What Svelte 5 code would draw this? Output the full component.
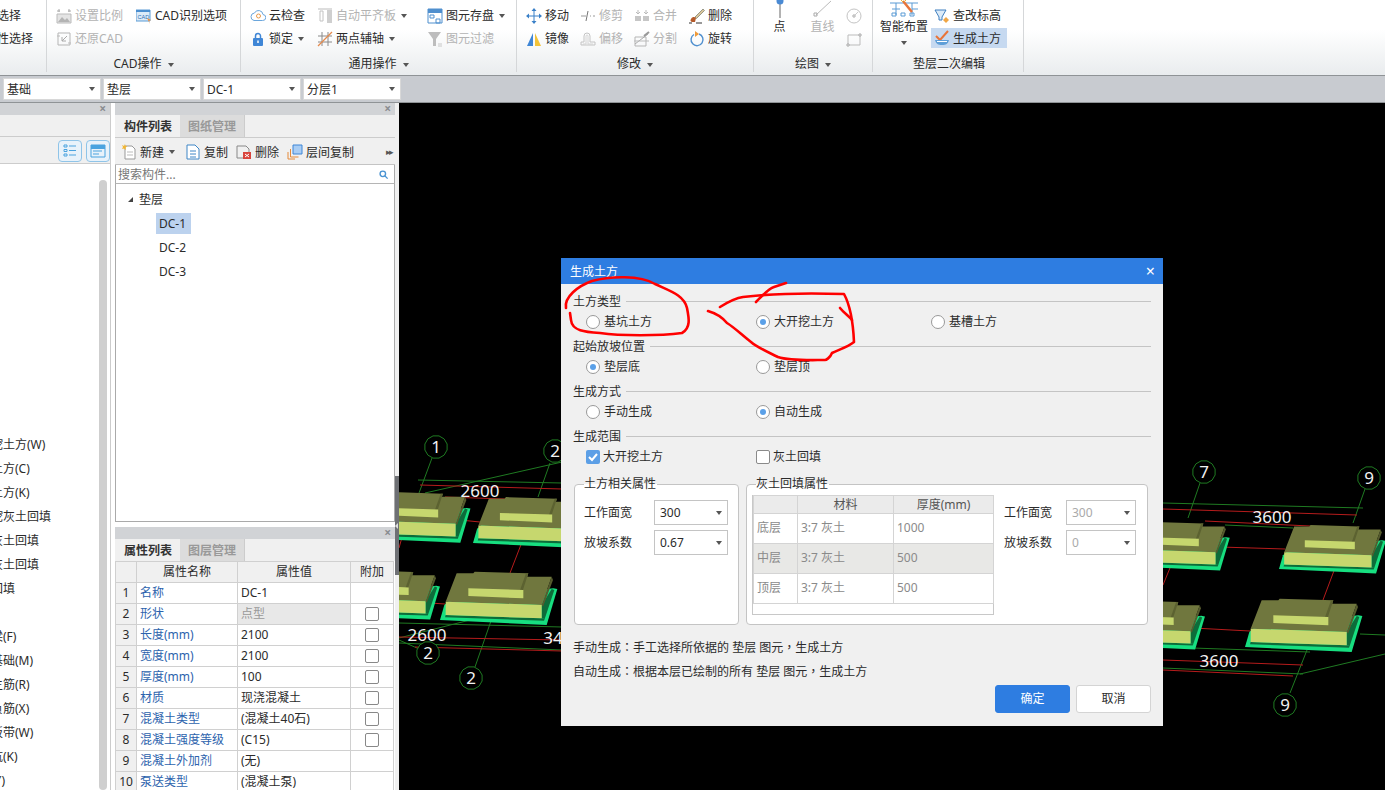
<script>
  const groups = [
    { w: 47, label: '', cols: [{ w: 46, items: [{ text: '选择', clip: -3 }, { text: '性选择', clip: -3 }] }] },
    { w: 194, pl: 9, label: 'CAD操作', cols: [
      { w: 80, items: [{ icon: 'scale', text: '设置比例', off: 1 }, { icon: 'restore', text: '还原CAD', off: 1 }] },
      { w: 100, items: [{ icon: 'cadopt', text: 'CAD识别选项' }] }
    ] },
    { w: 276, pl: 9, label: '通用操作', cols: [
      { w: 67, items: [{ icon: 'cloud', text: '云检查' }, { icon: 'lock', text: '锁定', caret: 1 }] },
      { w: 110, items: [{ icon: 'align', text: '自动平齐板', off: 1, caret: 1 }, { icon: 'axis', text: '两点辅轴', caret: 1 }] },
      { w: 85, items: [{ icon: 'save', text: '图元存盘', caret: 1 }, { icon: 'filter', text: '图元过滤', off: 1 }] }
    ] },
    { w: 237, pl: 9, label: '修改', cols: [
      { w: 54, items: [{ icon: 'move', text: '移动' }, { icon: 'mirror', text: '镜像' }] },
      { w: 54, items: [{ icon: 'trim', text: '修剪', off: 1 }, { icon: 'offset', text: '偏移', off: 1 }] },
      { w: 55, items: [{ icon: 'merge', text: '合并', off: 1 }, { icon: 'split', text: '分割', off: 1 }] },
      { w: 50, items: [{ icon: 'erase', text: '删除' }, { icon: 'rotate', text: '旋转' }] }
    ] }
  ];

  const combos = ['基础', '垫层', 'DC-1', '分层1'];

  const typeList = [
    '大开挖土方(W)', '基坑土方(C)', '基槽土方(K)', '大开挖灰土回填', '基槽灰土回填', '基坑灰土回填', '房心回填', '',
    '基础梁(F)', '筏板基础(M)', '筏板主筋(R)', '筏板负筋(X)', '基础板带(W)', '集水坑(K)', '柱墩(Y)'
  ];

  const props = [
    ['名称', 'DC-1', false],
    ['形状', '点型', true, 'off'],
    ['长度(mm)', '2100', true],
    ['宽度(mm)', '2100', true],
    ['厚度(mm)', '100', true],
    ['材质', '现浇混凝土', true],
    ['混凝土类型', '(混凝土40石)', true],
    ['混凝土强度等级', '(C15)', true],
    ['混凝土外加剂', '(无)', false],
    ['泵送类型', '(混凝土泵)', false]
  ];

  const sections = [
    { title: '土方类型', opts: [['基坑土方', false], ['大开挖土方', true], ['基槽土方', false]] },
    { title: '起始放坡位置', opts: [['垫层底', true], ['垫层顶', false]] },
    { title: '生成方式', opts: [['手动生成', false], ['自动生成', true]] }
  ];

  const layers = [['底层', '3:7 灰土', '1000'], ['中层', '3:7 灰土', '500'], ['顶层', '3:7 灰土', '500']];

  // canvas data, in page coordinates
  const footings = [
    [1245, 647, 1], [1279, 569, 0.91], [1123, 566, 0.91], [1097, 645, 0.92],
    [359, 538, 0.95], [473, 543, 0.95], [332, 615, 0.92], [440, 620, 1]
  ];
  const greenLines = [
    [432, 458, 419, 493], [425, 493, 562, 462], [418, 480, 562, 483], [550, 463, 538, 497],
    [399, 623, 562, 627], [399, 643, 562, 650], [475, 667, 492, 618], [399, 638, 470, 620],
    [1200, 483, 1188, 518], [1365, 489, 1353, 523], [1290, 693, 1307, 650],
    [1163, 503, 1363, 508], [1225, 525, 1293, 528], [1360, 634, 1385, 635],
    [1163, 647, 1310, 652], [1163, 668, 1303, 674], [1300, 674, 1385, 654], [399, 640, 428, 653]
  ];
  const redLines = [
    [420, 485, 562, 489], [445, 497, 505, 499], [522, 542, 510, 573], [399, 637, 562, 640],
    [415, 647, 562, 651], [1163, 509, 1357, 515], [1205, 521, 1310, 526], [1220, 547, 1285, 549],
    [1172, 563, 1163, 585], [1335, 568, 1323, 600], [1193, 628, 1250, 631], [1163, 660, 1303, 665],
    [1163, 670, 1293, 676], [460, 520, 480, 522], [430, 603, 445, 604], [399, 548, 404, 530]
  ];
  const marks = [[436, 447, '1'], [555, 451, '2'], [428, 653, '2'], [471, 678, '2'], [1204, 472, '7'], [1369, 478, '9'], [1285, 705, '9']];
  const dims = [[480, 497, '2600'], [427, 641, '2600'], [553, 644, '34'], [1272, 523, '3600'], [1219, 667, '3600']];

  const ring = (cx, cy) =>
    Array.from({ length: 12 }, (_, i) => {
      const a = (i * Math.PI) / 6 + Math.PI / 12;
      return `${(cx + 11.5 * Math.cos(a)).toFixed(1)},${(cy + 11.5 * Math.sin(a)).toFixed(1)}`;
    }).join(' ');
</script>

{#snippet icon(name)}
  <svg class="ico" viewBox="0 0 16 16" width="16" height="16" fill="none">
    {#if name === 'scale'}
      <path d="M1 15h14V6H1z" fill="#e4e4e4" stroke="#bbb"/><path d="M2 14l4-5 3 3 2-2 3 4z" fill="#b4b4b4"/><path d="M1 3h3M12 3h3M3 1v3M13 1v3" stroke="#aaa"/>
    {:else if name === 'restore'}
      <path d="M2 2h12v12H2z" stroke="#b5b5b5"/><path d="M11 5L6 10M6 6v4h4" stroke="#aaa"/><path d="M1 5h3M12 12h3" stroke="#bbb"/>
    {:else if name === 'cadopt'}
      <path d="M0 2h14v11H0z" fill="#dcebf8" stroke="#5b9bd5"/><path d="M0 2h14v2H0z" fill="#4b8fd0"/><text x="1.5" y="11" font-size="5.5" fill="#2d6fb5" font-family="Liberation Sans">CAD</text><path d="M11 10l4 2-2 1 1 3z" fill="#ef8f3a"/>
    {:else if name === 'cloud'}
      <path d="M4 12.500h8.500a3 3 0 0 0 .5-6 4.500 4.500 0 0 0-8.500-1.500A3.800 3.800 0 0 0 4 12.500z" stroke="#6ba6dc" fill="#fff"/><circle cx="8.500" cy="8" r="2" stroke="#ea9a4a"/>
    {:else if name === 'align'}
      <path d="M1 1h14" stroke="#bbb"/><path d="M3 3h3v10H3z" stroke="#c2c2c2"/><path d="M10 2h5v13h-5z" fill="#cfcfcf"/>
    {:else if name === 'lock'}
      <path d="M5.500 8V5a2.500 2.500 0 0 1 5 0v3" stroke="#3f86d6" stroke-width="1.500"/><path d="M4 7h8a1 1 0 0 1 1 1v6a1 1 0 0 1-1 1H4a1 1 0 0 1-1-1V8a1 1 0 0 1 1-1z" fill="#3f86d6"/><path d="M8 9.500v2.500" stroke="#fff" stroke-width="1.500"/>
    {:else if name === 'axis'}
      <path d="M1 5h14M1 11h14M5 1v14M11 1v14" stroke="#8a8a8a"/><path d="M1 15L15 1" stroke="#e58a4c" stroke-width="1.300"/>
    {:else if name === 'save'}
      <path d="M1 1h14v14H1z" fill="#fff" stroke="#4f8fce"/><path d="M1 1h14v4H1z" fill="#4f8fce"/><path d="M3 7h4v3H3zM9 11h4v4H9z" stroke="#4f8fce"/>
    {:else if name === 'filter'}
      <path d="M1 1h13L9 8v7H6V8z" fill="#bdbdbd"/><path d="M11 13h4M11 15h4" stroke="#c8c8c8"/>
    {:else if name === 'move'}
      <path d="M8 1v14M1 8h14" stroke="#3a80c8"/><path d="M8 0l2.500 3h-5zM8 16l2.500-3h-5zM0 8l3-2.500v5zM16 8l-3-2.500v5z" fill="#3a80c8"/>
    {:else if name === 'mirror'}
      <path d="M7 2v13H1z" fill="#3f86d6"/><path d="M9 2v13h6z" fill="#f2c33a"/>
    {:else if name === 'trim'}
      <path d="M1 8h5M10 8h1M13 8h2" stroke="#999"/><path d="M8 3L6 13" stroke="#777"/>
    {:else if name === 'offset'}
      <path d="M1 14v-3h3V5a3 3 0 0 1 6 0v6h5v3z" stroke="#c4c4c4"/><path d="M3 14v-1h3V5a1 1 0 0 1 2 0v8h5" stroke="#d4d4d4"/>
    {:else if name === 'merge'}
      <path d="M1 8h6v5H1zM9 8h6v5H9z" fill="#c6c6c6"/><path d="M4 2v4M12 2v4M2 4l2 2 2-2M10 4l2 2 2-2" stroke="#bbb"/>
    {:else if name === 'split'}
      <path d="M1 6h11v9H1z" stroke="#b5b5b5"/><path d="M1 13L14 3" stroke="#aaa"/><path d="M10 5l5-4" stroke="#999" stroke-width="2"/><path d="M0 10h15" stroke="#bbb"/>
    {:else if name === 'erase'}
      <path d="M6 9l8-8 1.500 1.500-8 8z" fill="#d9c59a" stroke="#998"/><path d="M2 11a3 3 0 0 1 5-1l-1 4H3a2 2 0 0 1-1-3z" fill="#b55a2a"/><path d="M0 15h3M7 15h6" stroke="#333"/>
    {:else if name === 'rotate'}
      <path d="M5 3.500A6 6 0 1 0 10 3" stroke="#4f8fce" stroke-width="1.400"/><path d="M6 0v6l4-3z" fill="#ef9a3a"/>
    {:else if name === 'list'}
      <path d="M2 2h3v2H2zM2 6.500h3v2H2zM2 11h3v2H2z" stroke="#4aa3df"/><path d="M7 3h7M7 7.500h7M7 12h7" stroke="#4aa3df"/>
    {:else if name === 'card'}
      <path d="M1 2h14v12H1z" stroke="#4aa3df"/><path d="M1 2h14v4H1z" fill="#4aa3df"/><path d="M3 8h9M3 11h6" stroke="#4aa3df"/>
    {:else if name === 'new'}
      <path d="M4 2h7l3 3v10H4z" fill="#fff" stroke="#999"/><path d="M1 1l2 1 1-2 .5 2 2 .500-2 1L5 6 3 4.500 1 5l1-2z" fill="#f2b632"/><path d="M6 8h6M6 11h6" stroke="#bbb"/>
    {:else if name === 'copy'}
      <path d="M2 1h8l4 4v10H2z" fill="#fff" stroke="#3f86c6"/><path d="M5 7h6M5 10h6M5 13h6" stroke="#3f86c6"/>
    {:else if name === 'del'}
      <path d="M1 2h9l3 3v3" stroke="#888"/><path d="M1 2v12h6" stroke="#888"/><path d="M7 8h8v7H7z" fill="#d9443c"/><path d="M9 10l4 3M13 10l-4 3" stroke="#fff"/>
    {:else if name === 'layer'}
      <path d="M6 1h9v9H6z" fill="#a9cdf4" stroke="#3f86d6"/><path d="M3.500 5v8h8" stroke="#e58a3a"/><path d="M1 8v7h7" stroke="#e58a3a"/>
    {:else if name === 'find'}
      <circle cx="7" cy="7" r="4" stroke="#4a93d2" stroke-width="2"/><path d="M10 10l4 4" stroke="#4a93d2" stroke-width="2"/>
    {:else if name === 'elev'}
      <path d="M1 2h11L8 9v3H5V9z" fill="#dcebf8" stroke="#3f7fbf"/><path d="M9 10l3 3 3-3-3-3z" fill="#f0a645" transform="translate(0 2)"/>
    {:else if name === 'earth'}
      <path d="M2 6l4 4 8-9" stroke="#e8743a" stroke-width="2"/><path d="M1 10c1 4 3 5 7 5s6-1 7-5z" fill="#5f9fd8"/><path d="M3 11.500h10" stroke="#fff"/>
    {/if}
  </svg>
{/snippet}

{#snippet ribbonItem(it)}
  <div class="rb-item" class:off={it.off}>
    {#if it.icon}{@render icon(it.icon)}{/if}
    <span class="t" style={it.clip ? `margin-left:${it.clip}px` : ''}>{it.text}</span>
    {#if it.caret}<i class="caret"></i>{/if}
  </div>
{/snippet}

<div class="app">
  <header class="ribbon">
    {#each groups as g}
      <section class="rb-group" style="width:{g.w}px">
        <div class="rb-cols" style="padding-left:{g.pl || 0}px">
          {#each g.cols as c}
            <div class="rb-col" style="width:{c.w}px">
              {#each c.items as it}{@render ribbonItem(it)}{/each}
            </div>
          {/each}
        </div>
        <div class="rb-label">{g.label}{#if g.label}<i class="caret"></i>{/if}</div>
      </section>
    {/each}

    <section class="rb-group draw">
      <div class="rb-cols">
        <div class="rb-big">
          <svg viewBox="0 0 20 18" width="20" height="18" fill="none"><path d="M10 2v16" stroke="#666"/><circle cx="10" cy="1" r="3.500" fill="#4a8ad4"/></svg>
          <span>点</span>
        </div>
        <div class="rb-big off">
          <svg viewBox="0 0 24 18" width="24" height="18" fill="none"><path d="M5 15L20 1" stroke="#bbb"/><path d="M3 13h3v3H3z" stroke="#aaa"/></svg>
          <span>直线</span>
        </div>
        <div class="rb-col shapes">
          <div class="rb-item"><svg class="ico" viewBox="0 0 16 16" width="16" height="16" fill="none"><circle cx="8" cy="8" r="7" stroke="#c4c4c4"/><circle cx="8" cy="8" r="1.200" stroke="#aaa"/><path d="M9 7l3-3" stroke="#ccc"/></svg></div>
          <div class="rb-item"><svg class="ico" viewBox="0 0 16 16" width="16" height="16" fill="none"><path d="M2 4h12v10H2z" stroke="#bbb"/><path d="M13 3h2v2h-2zM1 13h2v2H1z" fill="#fff" stroke="#aaa"/></svg></div>
        </div>
      </div>
      <div class="rb-label back">绘图<i class="caret"></i></div>
    </section>

    <section class="rb-group edit">
      <div class="rb-cols">
        <div class="rb-big smart">
          <svg viewBox="0 0 32 18" width="32" height="18" fill="none"><path d="M2 3h28M4 9h8M24 9h6M8 3v12M24 3v12" stroke="#5b9bd5"/><path d="M4 13h4v3H4zM22 13h4v3h-4zM13 13h4v3h-4z" stroke="#5b9bd5"/><path d="M15 1l9 11" stroke="#e8743a" stroke-width="2.500"/><path d="M13 0l2 2M18 0l-2 2" stroke="#e8b03a"/></svg>
          <span>智能布置</span>
          <i class="caret"></i>
        </div>
        <div class="rb-col elev">
          <div class="rb-item">{@render icon('elev')}<span class="t">查改标高</span></div>
          <div class="rb-item on">{@render icon('earth')}<span class="t">生成土方</span></div>
        </div>
      </div>
      <div class="rb-label low">垫层二次编辑</div>
    </section>
  </header>

  <div class="combos">
    {#each combos as c}
      <div class="combo"><span class="t">{c}</span><i class="caret"></i></div>
    {/each}
  </div>

  <div class="main">
    <aside class="types">
      <div class="pane-head"><b>×</b></div>
      <div class="types-sub"></div>
      <div class="types-tools">
        <span class="view-btn">{@render icon('list')}</span>
        <span class="view-btn">{@render icon('card')}</span>
      </div>
      <div class="types-list">
        {#each typeList as t}
          <div class="type-row"><span>{t}</span></div>
        {/each}
        <div class="scroll"></div>
      </div>
    </aside>

    <div class="mid">
      <div class="pane-head"><b>×</b></div>
      <div class="tabs"><span class="tab on">构件列表</span><span class="tab">图纸管理</span></div>
      <div class="comp-tools">
        <span class="tool first">{@render icon('new')}<span class="t">新建</span><i class="caret"></i></span>
        <span class="tool">{@render icon('copy')}<span class="t">复制</span></span>
        <span class="tool">{@render icon('del')}<span class="t">删除</span></span>
        <span class="tool">{@render icon('layer')}<span class="t">层间复制</span></span>
        <span class="more">▸▸</span>
      </div>
      <div class="search"><span class="t">搜索构件...</span>{@render icon('find')}</div>
      <div class="tree">
        <div class="tree-root"><i class="tri"></i><span class="t">垫层</span></div>
        <div class="tree-leaf on">DC-1</div>
        <div class="tree-leaf">DC-2</div>
        <div class="tree-leaf">DC-3</div>
      </div>

      <div class="pane-gap"></div>
      <div class="pane-head"><b>×</b></div>
      <div class="tabs prop"><span class="tab on">属性列表</span><span class="tab">图层管理</span></div>
      <table class="props">
        <colgroup><col class="c1" /><col class="c2" /><col class="c3" /><col class="c4" /></colgroup>
        <thead><tr><th></th><th>属性名称</th><th>属性值</th><th>附加</th></tr></thead>
        <tbody>
          {#each props as p, i}
            <tr>
              <td class="num">{i + 1}</td>
              <td class="name">{p[0]}</td>
              <td class:ro={p[3] === 'off'}>{p[1]}</td>
              <td class="add">{#if p[2]}<i class="addbox"></i>{/if}</td>
            </tr>
          {/each}
        </tbody>
      </table>
    </div>

    <div class="strip"><div class="handle"><i></i></div></div>

    <div class="canvas">
      <svg class="cad" viewBox="399 103 986 687" width="986" height="687">
        {#each greenLines as l}<line x1={l[0]} y1={l[1]} x2={l[2]} y2={l[3]} stroke="#1f7a22" />{/each}
        {#each redLines as l}<line x1={l[0]} y1={l[1]} x2={l[2]} y2={l[3]} stroke="#b51c1c" />{/each}
        {#each footings as f}
          <g transform="translate({f[0]} {f[1]}) scale({f[2] / 3})">
            <polygon points="0,0 13,-45 30,-60 340,-95 352,-93 320,15" fill="#17df80" />
            <polygon points="305,-45 335,-93 343,-90 314,-3 305,-5" fill="#0d6c3a" />
            <polygon points="17,-15 305,-5 314,-3 312,2 15,-8" fill="#0d6c3a" />
            <polygon points="17,-55 50,-140 100,-140 104,-145 265,-140 262,-130 335,-130 305,-45" fill="#70773e" />
            <polygon points="305,-45 335,-130 339,-120 309,-40" fill="#555b2d" />
            <polygon points="265,-140 248,-88 240,-89 258,-140" fill="#5c6231" />
            <polygon points="17,-55 305,-45 305,-5 17,-15" fill="#c6d76e" />
            <polygon points="85,-95 250,-90 250,-65 85,-72" fill="#c6d76e" />
          </g>
        {/each}
        {#each marks as m}
          <polygon points={ring(m[0], m[1])} stroke="#1f7a22" fill="#000" />
          <text x={m[0]} y={m[1] + 6} class="cad-num">{m[2]}</text>
        {/each}
        {#each dims as d}
          <text x={d[0]} y={d[1]} class="cad-num">{d[2]}</text>
        {/each}
      </svg>

      <div class="dialog">
        <div class="dlg-title"><span class="t">生成土方</span><b>×</b></div>
        <div class="dlg-body">
          {#each sections as s}
            <div class="sec">
              <div class="sec-title"><span class="t">{s.title}</span><i></i></div>
              <div class="opts">
                {#each s.opts as o}
                  <div class="opt"><i class="radio" class:on={o[1]}></i><span class="t">{o[0]}</span></div>
                {/each}
              </div>
            </div>
          {/each}
          <div class="sec">
            <div class="sec-title"><span class="t">生成范围</span><i></i></div>
            <div class="opts">
              <div class="opt tick">
                <i class="check on"><svg viewBox="0 0 14 14" width="14" height="14" fill="none"><path d="M3 7l3 3 5-6" stroke="#fff" stroke-width="2" /></svg></i><span class="t">大开挖土方</span>
              </div>
              <div class="opt tick"><i class="check"></i><span class="t">灰土回填</span></div>
            </div>
          </div>

          <div class="boxes">
            <div class="box left">
              <span class="legend">土方相关属性</span>
              <div class="field"><span class="lbl t">工作面宽</span><div class="pick"><span class="t">300</span><i class="caret"></i></div></div>
              <div class="field"><span class="lbl t">放坡系数</span><div class="pick"><span class="t">0.67</span><i class="caret"></i></div></div>
            </div>
            <div class="box right">
              <span class="legend">灰土回填属性</span>
              <div class="grid-wrap">
                <table class="layers">
                  <colgroup><col class="l1" /><col class="l2" /><col class="l3" /></colgroup>
                  <thead><tr><th></th><th>材料</th><th>厚度(mm)</th></tr></thead>
                  <tbody>
                    {#each layers as r, i}
                      <tr class:alt={i === 1}><td>{r[0]}</td><td>{r[1]}</td><td>{r[2]}</td></tr>
                    {/each}
                  </tbody>
                </table>
              </div>
              <div class="fields-off">
                <div class="field"><span class="lbl t">工作面宽</span><div class="pick dis"><span class="t">300</span><i class="caret"></i></div></div>
                <div class="field"><span class="lbl t">放坡系数</span><div class="pick dis"><span class="t">0</span><i class="caret"></i></div></div>
              </div>
            </div>
          </div>

          <p class="note">手动生成<span class="zh">：</span>手工选择所依据的 垫层 图元<span class="zh">，</span>生成土方</p>
          <p class="note">自动生成<span class="zh">：</span>根据本层已绘制的所有 垫层 图元<span class="zh">，</span>生成土方</p>

          <div class="btns">
            <button class="ok"><span class="t">确定</span></button>
            <button><span class="t">取消</span></button>
          </div>
        </div>

        <svg class="ink" viewBox="561 258 602 468" width="602" height="468" fill="none">
          <path d="M566 308C564 297 578 286 592 281C610 276 640 275 655 284C670 291 684 295 687 308C689 318 691 328 682 333C660 336 620 336 600 333C585 332 572 331 571 320L570 313" />
          <path d="M720 307C728 302 735 298 743 297C775 293 810 293 844 294C850 305 853 320 854 342C848 347 838 350 832 353C830 358 826 360 825 360C810 360 790 361 778 357C768 352 758 348 751 342C742 335 735 328 727 323C722 317 715 313 708 311" />
          <path d="M756 302C762 296 768 289 774 287L786 283" />
          <path d="M840 308C844 313 849 316 852 320" />
        </svg>
      </div>
    </div>
  </div>
</div>

<style>
  :global(body) {
    margin: 0;
    background: #000;
  }
  .app {
    width: 1385px;
    height: 790px;
    overflow: hidden;
    font: 12px/1.2 "Noto Sans", "Noto Sans CJK SC", sans-serif;
    color: #2b2b2b;
    position: relative;
  }
  /* Noto sits a pixel high next to the icons */
  .t {
    padding-top: 2px;
  }
  .caret {
    display: inline-block;
    width: 0;
    height: 0;
    margin-left: 6px;
    border: 3px solid transparent;
    border-top: 4px solid #555;
    border-bottom: 0;
    vertical-align: middle;
  }
  .rb-item .caret,
  .tool .caret {
    margin-left: 2px;
  }
  .ico {
    flex: none;
  }

  /* ribbon */
  .ribbon {
    display: flex;
    height: 75px;
    background: linear-gradient(#fff 0, #fff 40%, #e9ecee 100%);
    border-bottom: 2px solid #8f9396;
    box-sizing: content-box;
  }
  .rb-group {
    box-sizing: border-box;
    height: 72px;
    flex: none;
    border-right: 1px solid #d5d7d9;
    display: flex;
    flex-direction: column;
  }
  .rb-cols {
    display: flex;
    height: 54px;
  }
  .rb-col {
    flex: none;
    padding-top: 4px;
  }
  .rb-item {
    display: flex;
    align-items: center;
    gap: 3px;
    height: 23px;
    white-space: nowrap;
  }
  .rb-item.off,
  .rb-big.off {
    color: #b3b3b3;
  }
  .rb-item.on {
    background: #c6d9f0;
    height: 20px;
    margin-top: 1px;
    padding-left: 3px;
    width: 76px;
    box-sizing: border-box;
  }
  .rb-label {
    text-align: center;
    height: 18px;
    line-height: 20px;
  }
  .rb-label.back {
    margin-left: -4px;
  }
  .rb-label.low {
    margin-top: 1px;
    padding: 1px 0 0 2px;
    line-height: 20px;
  }
  .rb-big {
    width: 43px;
    display: flex;
    flex-direction: column;
    align-items: center;
    flex: none;
  }
  .rb-big span {
    height: 18px;
    line-height: 18px;
    white-space: nowrap;
  }
  .rb-big .caret {
    margin: 5px 0 0;
  }
  .draw {
    width: 119px;
    padding-left: 4px;
  }
  .shapes {
    margin-left: 2px;
  }
  .edit {
    width: 151px;
  }
  .smart {
    width: 58px;
    margin-left: 2px;
  }
  .elev {
    margin-left: -2px;
  }
  .elev .rb-item:first-child {
    padding-left: 3px;
  }

  /* combos */
  .combos {
    display: flex;
    gap: 2px;
    height: 27px;
    box-sizing: border-box;
    padding: 2px 0 0 3px;
    background: #c8cbd0;
    border-bottom: 1px solid #8f9396;
    margin-top: -1px;
  }
  .combo {
    width: 98px;
    height: 22px;
    box-sizing: border-box;
    background: #fff;
    padding-left: 3px;
    display: flex;
    align-items: center;
    justify-content: space-between;
    padding-right: 5px;
    border: 1px solid #d8d8d8;
  }

  .main {
    display: flex;
    height: 687px;
    background: #fff;
  }
  .pane-head {
    height: 12px;
    background: #d1d3d6;
    position: relative;
    flex: none;
  }
  .pane-head b {
    position: absolute;
    right: 4px;
    top: -1px;
    font-size: 12px;
    font-weight: 700;
    line-height: 13px;
    color: #8a8c90;
  }

  /* left column */
  .types {
    width: 111px;
    flex: none;
    border-right: 1px solid #ccc;
    box-sizing: border-box;
    display: flex;
    flex-direction: column;
  }
  .types-sub {
    height: 21px;
    background: #f0f0f0;
    border-bottom: 1px solid #ccc;
  }
  .types-tools {
    height: 27px;
    box-sizing: border-box;
    background: #f0f0f0;
    border-bottom: 1px solid #ccc;
    display: flex;
    justify-content: flex-end;
    gap: 4px;
    padding-top: 3px;
  }
  .view-btn {
    width: 24px;
    height: 22px;
    box-sizing: border-box;
    border: 1px solid #8fc4e8;
    border-radius: 4px;
    background: #e8f2fa;
    display: flex;
    align-items: center;
    justify-content: center;
  }
  .types-list {
    flex: 1;
    padding-top: 269px;
    position: relative;
    overflow: hidden;
  }
  .type-row {
    height: 24px;
    line-height: 24px;
    white-space: nowrap;
  }
  .type-row span {
    margin-left: -33px;
  }
  .scroll {
    position: absolute;
    left: 99px;
    top: 16px;
    bottom: 0;
    width: 8px;
    background: #cfcfcf;
    border-radius: 4px;
  }

  /* component and property panes */
  .mid {
    width: 280px;
    margin-left: 4px;
    flex: none;
    display: flex;
    flex-direction: column;
    overflow: hidden;
  }
  .mid > * {
    flex: none;
  }
  .tabs {
    height: 22px;
    background: #f0f0f0;
    display: flex;
    padding-left: 1px;
  }
  .tab {
    width: 64px;
    text-align: center;
    line-height: 24px;
    height: 22px;
    background: #dcdcdc;
    color: #999;
    font-weight: 700;
    border-right: 1px solid #ccc;
  }
  .tab.on {
    background: #f0f0f0;
    color: #333;
    border: 0;
  }
  .comp-tools {
    height: 28px;
    box-sizing: border-box;
    background: #f0f0f0;
    border-top: 1px solid #ccc;
    border-bottom: 1px solid #c4c4c4;
    display: flex;
    align-items: center;
    gap: 8px;
    padding: 2px 0 0 6px;
    position: relative;
  }
  .tool {
    display: flex;
    align-items: center;
    gap: 3px;
    white-space: nowrap;
  }
  .tool.first {
    margin-right: 2px;
  }
  .more {
    position: absolute;
    right: 3px;
    font-size: 9px;
    color: #555;
    letter-spacing: -2px;
  }
  .search {
    height: 19px;
    box-sizing: border-box;
    border-bottom: 1px solid #b5b5b5;
    border-left: 1px solid #aaa;
    border-right: 1px solid #aaa;
    padding: 0 5px 0 2px;
    display: flex;
    align-items: center;
    justify-content: space-between;
    color: #777;
  }
  .search .ico {
    width: 11px;
    height: 11px;
  }
  .tree {
    height: 338px;
    box-sizing: border-box;
    padding-top: 3px;
    border: 1px solid #aaa;
    border-top: 0;
  }
  .tree-root {
    height: 24px;
    display: flex;
    align-items: center;
    padding-left: 12px;
  }
  .tri {
    width: 0;
    height: 0;
    border-left: 5px solid transparent;
    border-bottom: 5px solid #444;
    margin-right: 6px;
  }
  .tree-leaf {
    width: 35px;
    height: 24px;
    line-height: 26px;
    margin-left: 40px;
    padding-left: 3px;
    box-sizing: border-box;
  }
  .tree-leaf.on {
    background: #bcd2ee;
    height: 21px;
    line-height: 22px;
    margin: 2px 0 1px 40px;
  }
  .pane-gap {
    height: 5px;
  }
  .props {
    width: 278px;
    table-layout: fixed;
    border-collapse: collapse;
    border-left: 1px solid #ccc;
  }
  .c1 { width: 21px; }
  .c2 { width: 101px; }
  .c3 { width: 113px; }
  .c4 { width: 43px; }
  .props th,
  .props td {
    height: 21px;
    padding: 1px 0 0;
    box-sizing: border-box;
    border: 1px solid #d0d0d0;
    white-space: nowrap;
  }
  .props th {
    background: #f0f0f0;
    font-weight: 400;
  }
  .props td {
    padding-left: 3px;
  }
  .props td.num {
    background: #f0f0f0;
    text-align: center;
    padding-left: 0;
  }
  .props td.name {
    color: #2d63ad;
  }
  .props td.ro {
    background: #e8e8e8;
    color: #999;
  }
  .props td.add {
    text-align: center;
    padding: 0;
  }
  .addbox {
    display: block;
    width: 14px;
    height: 14px;
    margin: 0 auto;
    box-sizing: border-box;
    border: 1px solid #888;
    border-radius: 2px;
  }
  .strip {
    width: 4px;
    flex: none;
    background: #f0f0f0;
    padding-top: 373px;
    box-sizing: border-box;
  }
  .handle {
    height: 99px;
    background: #6e7074;
    display: flex;
    align-items: center;
  }
  .handle i {
    border: 3px solid transparent;
    border-right: 3px solid #ddd;
    border-left: 0;
  }

  /* canvas and dialog */
  .canvas {
    flex: 1;
    background: #000;
    position: relative;
    overflow: hidden;
  }
  .cad {
    display: block;
  }
  .cad-num {
    fill: #f2f2f2;
    font: 17px "Noto Sans", sans-serif;
    text-anchor: middle;
  }
  .dialog {
    position: absolute;
    left: 162px;
    top: 155px;
    width: 602px;
    height: 468px;
    background: #f0f0f0;
  }
  .dlg-title {
    height: 26px;
    background: #2e7de1;
    color: #fff;
    display: flex;
    align-items: center;
    justify-content: space-between;
    padding: 0 8px 0 9px;
  }
  .dlg-title b {
    font-size: 16px;
    font-weight: 400;
    line-height: 16px;
  }
  .dlg-body {
    padding: 8px 12px 0;
  }
  .sec {
    height: 45px;
  }
  .sec-title {
    display: flex;
    align-items: center;
    gap: 5px;
    height: 18px;
    white-space: nowrap;
  }
  .sec-title .t {
    padding-top: 3px;
  }
  .sec-title i {
    flex: 1;
    height: 1px;
    background: #c4c4c4;
  }
  .opts {
    display: grid;
    grid-template-columns: 170px 175px 1fr;
    height: 22px;
    padding: 1px 0 0 13px;
    box-sizing: border-box;
  }
  .opt {
    display: flex;
    align-items: center;
    gap: 4px;
    white-space: nowrap;
  }
  .radio {
    width: 14px;
    height: 14px;
    box-sizing: border-box;
    border: 1px solid #999;
    border-radius: 50%;
    background: #fff;
    display: flex;
    align-items: center;
    justify-content: center;
  }
  .radio.on::after {
    content: "";
    width: 6px;
    height: 6px;
    border-radius: 50%;
    background: #5aa0e8;
  }
  .check {
    width: 14px;
    height: 14px;
    box-sizing: border-box;
    border: 1px solid #8a8a8a;
    border-radius: 2px;
    background: #fff;
    flex: none;
  }
  .check.on {
    background: #5c9fe6;
    border: 0;
  }
  .check svg {
    display: block;
  }
  .tick {
    gap: 3px;
  }
  .boxes {
    display: flex;
    gap: 7px;
    margin: 12px 0 0 1px;
  }
  .box {
    position: relative;
    height: 141px;
    box-sizing: border-box;
    background: #fff;
    border: 1px solid #c4c4c4;
    border-radius: 4px;
  }
  .box.left {
    width: 165px;
    padding: 15px 0 0 9px;
  }
  .box.right {
    width: 402px;
    padding: 10px 0 0 5px;
    display: flex;
    gap: 10px;
  }
  .legend {
    position: absolute;
    left: 9px;
    top: -8px;
    padding-right: 1px;
    background: linear-gradient(#f0f0f0 50%, #fff 50%);
  }
  .field {
    display: flex;
    align-items: center;
    height: 25px;
    margin-bottom: 5px;
  }
  .lbl {
    width: 70px;
    flex: none;
  }
  .fields-off {
    padding-top: 5px;
  }
  .fields-off .lbl {
    width: 62px;
  }
  .pick {
    width: 74px;
    height: 25px;
    box-sizing: border-box;
    border: 1px solid #c4c4c4;
    background: #fff;
    padding: 0 5px;
    display: flex;
    align-items: center;
    justify-content: space-between;
  }
  .pick.dis {
    width: 70px;
    color: #aaa;
  }
  .grid-wrap {
    width: 242px;
    height: 120px;
    box-sizing: border-box;
    border: 1px solid #c8c8c8;
    flex: none;
  }
  .layers {
    width: 240px;
    table-layout: fixed;
    border-collapse: collapse;
    margin-top: -1px;
  }
  .l1 { width: 44px; }
  .l2 { width: 96px; }
  .l3 { width: 100px; }
  .layers th,
  .layers td {
    border: 1px solid #d4d4d4;
    color: #8a8a8a;
    text-align: left;
    padding: 0 0 0 3px;
    height: 30px;
    box-sizing: border-box;
  }
  .layers th {
    height: 18px;
    background: #ebebeb;
    color: #555;
    font-weight: 400;
    text-align: center;
    padding: 1px 0 0;
  }
  .layers tr.alt td {
    background: #e8e8e6;
  }
  .note {
    margin: 0;
    height: 24px;
    line-height: 26px;
    white-space: nowrap;
  }
  .zh {
    font-family: "Noto Sans CJK TC", sans-serif;
  }
  .boxes + .note {
    margin-top: 9px;
  }
  .btns {
    display: flex;
    justify-content: flex-end;
    gap: 6px;
    margin-top: 3px;
  }
  .btns button {
    width: 75px;
    height: 28px;
    font: inherit;
    color: inherit;
    background: #fff;
    border: 1px solid #d4d4d4;
    border-radius: 3px;
  }
  .btns .ok {
    background: #2e7de1;
    border-color: #2e7de1;
    color: #fff;
  }
  .ink {
    position: absolute;
    left: 0;
    top: 0;
    pointer-events: none;
  }
  .ink path {
    stroke: #f00;
    stroke-width: 2.6;
    stroke-linecap: round;
    stroke-linejoin: round;
  }
</style>
